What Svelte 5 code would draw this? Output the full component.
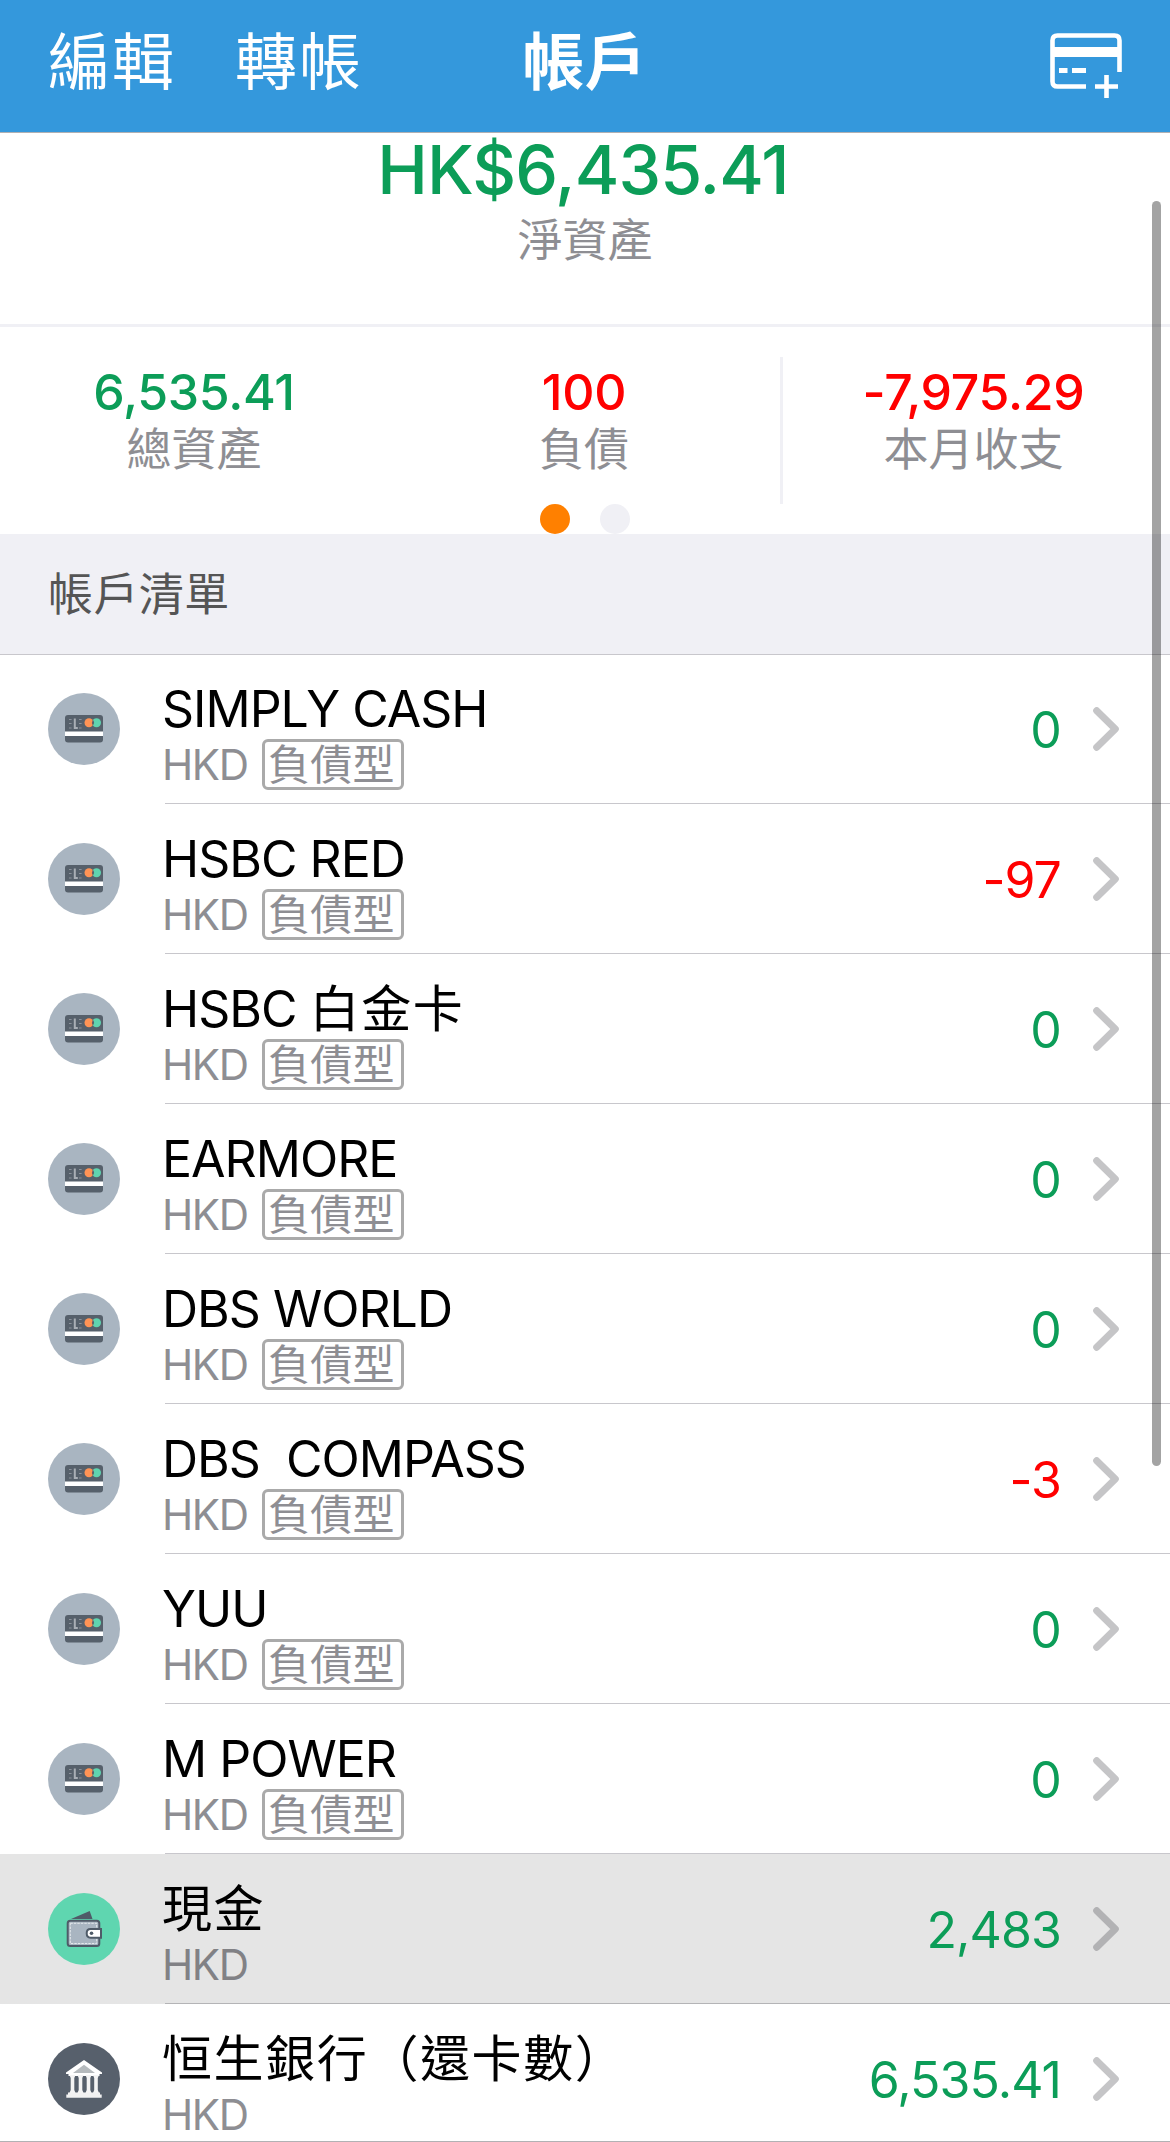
<script lang="ts">
    type Account = {
        name: string;
        amount: string;
        icon: "card" | "wallet" | "bank";
        liability?: boolean;
        selected?: boolean;
    };

    const accounts: Account[] = [
        { name: "SIMPLY CASH", amount: "0", icon: "card", liability: true },
        { name: "HSBC RED", amount: "-97", icon: "card", liability: true },
        { name: "HSBC 白金卡", amount: "0", icon: "card", liability: true },
        { name: "EARMORE", amount: "0", icon: "card", liability: true },
        { name: "DBS WORLD", amount: "0", icon: "card", liability: true },
        { name: "DBS  COMPASS", amount: "-3", icon: "card", liability: true },
        { name: "YUU", amount: "0", icon: "card", liability: true },
        { name: "M POWER", amount: "0", icon: "card", liability: true },
        { name: "現金", amount: "2,483", icon: "wallet", selected: true },
        { name: "恒生銀行（還卡數）", amount: "6,535.41", icon: "bank" },
    ];

    const stats = [
        { value: "6,535.41", label: "總資產", negative: false },
        { value: "100", label: "負債", negative: true },
        { value: "-7,975.29", label: "本月收支", negative: true },
    ];

    // Latin and Chinese runs are tracked differently, so names are split into runs.
    function runs(name: string): string[] {
        return name.match(/[\x00-\x7f]+|[^\x00-\x7f]+/g) ?? [];
    }
</script>

<div class="screen">
    <header class="navbar">
        <nav class="actions">
            <span>編輯</span>
            <span>轉帳</span>
        </nav>
        <h1>帳戶</h1>
        <svg class="addcard" viewBox="0 0 74 66" fill="none" stroke="#fff">
            <path
                d="M37 54.5H8.5Q3.5 54.5 3.5 49.5V8.5Q3.5 3.5 8.5 3.5H65.5Q70.5 3.5 70.5 8.5V40"
                stroke-width="4.6"
            />
            <path d="M3 20H71" stroke-width="10" />
            <path d="M10 38.5H18.5M23 38.5H37" stroke-width="5" />
            <path d="M46 54.5H69M57.5 43V66" stroke-width="4.6" />
        </svg>
    </header>

    <section class="networth">
        <div class="total">HK$6,435.41</div>
        <div class="caption">淨資產</div>
    </section>

    <section class="stats">
        {#each stats as stat}
            <div class="stat">
                <div class="value" class:negative={stat.negative}>{stat.value}</div>
                <div class="caption">{stat.label}</div>
            </div>
        {/each}
    </section>
    <div class="pager">
        <i class="dot on"></i>
        <i class="dot"></i>
    </div>

    <h2 class="listhead">帳戶清單</h2>

    <ul class="list">
        {#each accounts as account}
            <li class="row" class:selected={account.selected}>
                <svg class="icon" viewBox="0 0 72 72">
                    {#if account.icon === "card"}
                        <circle cx="36" cy="36" r="36" fill="#a9b5c1" />
                        <rect x="17" y="22" width="38" height="27.5" rx="3" fill="#56606b" />
                        <rect x="17" y="38.5" width="38" height="4.5" fill="#fff" />
                        <g stroke="#8b929b" stroke-width="1.2" fill="none">
                            <path d="M21 26.5h2.600M21 30.5h2.600M21 35h2.600M31 26.5h2.600M31 30.5h2.600M31 35h2.600" />
                            <path d="M26.8 25.5v9.5h3" stroke-width="2" stroke="#a9aeb5" />
                        </g>
                        <circle cx="48.5" cy="29.7" r="4.5" fill="#60d4b0" />
                        <circle cx="41" cy="29.7" r="4.5" fill="#ff9355" />
                        <path d="M44.8 26.8q2.6 2.9 0 5.8q-1.6-2.9 0-5.8z" fill="#56606b" />
                    {:else if account.icon === "wallet"}
                        <circle cx="36" cy="36" r="36" fill="#5fd6b0" />
                        <path d="M23 26L41.7 18L44.5 26Z" fill="#4f5b68" />
                        <rect
                            x="19.7"
                            y="27.7"
                            width="31.6"
                            height="25.3"
                            rx="2.5"
                            fill="#a9b5c1"
                            stroke="#4f5b68"
                            stroke-width="2"
                        />
                        <rect
                            x="22.3"
                            y="30.3"
                            width="26.4"
                            height="20.2"
                            fill="none"
                            stroke="#e4e9ec"
                            stroke-dasharray="2.5 1"
                        />
                        <path
                            d="M53 36H42.5Q38.7 36 38.7 40.3Q38.7 44.7 42.5 44.7H53Z"
                            fill="#fff"
                            stroke="#4f5b68"
                            stroke-width="2"
                        />
                        <circle cx="43.5" cy="40.3" r="1.8" fill="#4f5b68" />
                    {:else}
                        <circle cx="36" cy="36" r="36" fill="#57606c" />
                        <path d="M36 17L54 29.5V31H51.5V33H20.5V31H18V29.5Z" fill="#fff" />
                        <path d="M36 21.8L47 30H25Z" fill="#b5babd" />
                        <path
                            d="M21.5 32h6l-1.2 3v12l1.2 3h-6l1.2-3v-12zM29.5 32h6l-1.2 3v12l1.2 3h-6l1.2-3v-12zM37.5 32h6l-1.2 3v12l1.2 3h-6l1.2-3v-12zM45 32h6l-1.2 3v12l1.2 3h-6l1.2-3v-12z"
                            fill="#f4f4f4"
                        />
                        <path d="M20 49.5H52V51.5H53.7V54.7H18.3V51.5H20Z" fill="#f1f1f1" />
                    {/if}
                </svg>
                <div class="body">
                    <div class="text">
                        <div class="name">
                            {#each runs(account.name) as run}<span class:cjk={run > "\x7f"}>{run}</span>{/each}
                        </div>
                        <div class="meta">
                            <span class="currency">HKD</span>
                            {#if account.liability}
                                <span class="tag">負債型</span>
                            {/if}
                        </div>
                    </div>
                    <div class="amount" class:negative={account.amount.startsWith("-")}>
                        {account.amount}
                    </div>
                    <svg class="chevron" viewBox="0 0 26 44">
                        <path
                            d="M3.7 3.7L22.3 22L3.7 40.3"
                            fill="none"
                            stroke="currentColor"
                            stroke-width="7"
                            stroke-linecap="round"
                            stroke-linejoin="round"
                        />
                    </svg>
                </div>
            </li>
        {/each}
    </ul>

    <div class="scrollbar"></div>
    <div class="edge"></div>
</div>

<style>
    :global(body) {
        margin: 0;
        background: #fff;
    }
    .screen {
        --green: #0c9d58;
        --red: #ff0000;
        --gray: #8e8e93;
        --line: #c8c7cc;
        --pale: #f0f0f5;

        position: relative;
        width: 1170px;
        height: 2142px;
        overflow: hidden;
        background: #fff;
        color: #000;
        font-family: Inter, "Noto Sans CJK TC", sans-serif;
        font-weight: 400;
    }
    .screen * {
        box-sizing: border-box;
    }

    /* top bar */
    .navbar {
        display: grid;
        grid-template-columns: 1fr auto 1fr;
        align-items: center;
        height: 133px;
        padding: 0 47px 7px 48px;
        background: #3498dc;
        border-bottom: 1px solid #b0b0b3;
        color: #fff;
    }
    .actions {
        display: flex;
        gap: 59px;
        font-size: 62px;
        line-height: 80px;
        letter-spacing: 2px;
    }
    h1 {
        margin: 0 2px 0 0;
        font-size: 62px;
        line-height: 80px;
        font-weight: 700;
    }
    .addcard {
        justify-self: end;
        width: 74px;
        height: 66px;
        margin-top: 4px;
    }

    /* net worth + stats */
    .networth {
        height: 194px;
        border-bottom: 3px solid var(--pale);
        text-align: center;
    }
    .total {
        height: 78px;
        padding-right: 4px;
        font-size: 68px;
        line-height: 72px;
        font-weight: 500;
        letter-spacing: -0.9px;
        color: var(--green);
    }
    .caption {
        font-size: 45px;
        line-height: 60px;
        color: var(--gray);
    }
    .stats {
        display: grid;
        grid-template-columns: repeat(3, 1fr);
        height: 177px;
        padding-top: 30px;
    }
    .stat {
        height: 147px;
        padding-top: 5px;
        padding-right: 2px;
        text-align: center;
    }
    .stat:last-child {
        padding-right: 6px;
        border-left: 3px solid var(--pale);
    }
    .value {
        height: 58px;
        font-size: 50px;
        line-height: 60px;
        font-weight: 500;
        letter-spacing: -0.3px;
        color: var(--green);
    }
    .negative {
        color: var(--red) !important;
    }
    .pager {
        display: flex;
        justify-content: center;
        gap: 30px;
        height: 30px;
    }
    .dot {
        width: 30px;
        height: 30px;
        border-radius: 50%;
        background: var(--pale);
    }
    .dot.on {
        background: #ff8000;
    }

    /* account list */
    .listhead {
        height: 121px;
        margin: 0;
        padding-left: 48px;
        background: var(--pale);
        border-bottom: 1px solid var(--line);
        font-size: 45px;
        line-height: 122px;
        letter-spacing: 0.4px;
        font-weight: 400;
        color: #555;
    }
    .list {
        margin: -1px 0 0;
        padding: 0;
        list-style: none;
    }
    .row {
        display: flex;
        align-items: center;
        height: 150px;
        padding-left: 48px;
    }
    .icon {
        flex: none;
        width: 72px;
        height: 72px;
        margin-right: 45px;
    }
    .body {
        flex: 1;
        display: flex;
        align-items: center;
        height: 150px;
        padding-right: 51px;
        border-bottom: 1px solid var(--line);
    }
    .text {
        flex: 1;
        padding-top: 11px;
        margin-left: -3px;
    }
    .name {
        display: flex;
        height: 60px;
        font-size: 50px;
        line-height: 60px;
        letter-spacing: -1px;
        white-space: pre;
    }
    .cjk {
        letter-spacing: 1.6px;
    }
    .meta {
        display: flex;
        align-items: center;
        height: 51px;
        font-size: 42px;
        line-height: 51px;
        color: var(--gray);
    }
    .currency {
        width: 100px;
        letter-spacing: -1.4px;
    }
    .tag {
        height: 51px;
        padding: 0 6px 0 3px;
        border: 3px solid #aaa;
        border-radius: 6px;
        line-height: 46px;
        letter-spacing: 0.2px;
    }
    .amount {
        margin-right: 32px;
        padding-top: 3px;
        font-size: 50px;
        line-height: 60px;
        letter-spacing: -0.9px;
        color: var(--green);
    }
    .chevron {
        width: 26px;
        height: 44px;
        color: #c5c5c7;
    }
    .selected {
        background: #e5e5e5;
    }
    .selected .body {
        border-color: #b4b4b6;
    }
    .selected .chevron {
        color: #b2b2b4;
    }
    .selected .meta {
        color: #818185;
    }

    /* overlays */
    .scrollbar {
        position: absolute;
        top: 201px;
        right: 9px;
        width: 9px;
        height: 1265px;
        border-radius: 5px;
        background: rgba(0, 0, 0, 0.36);
    }
    .edge {
        position: absolute;
        left: 0;
        right: 0;
        bottom: 0;
        height: 1px;
        background: #b2b2b4;
    }
</style>
